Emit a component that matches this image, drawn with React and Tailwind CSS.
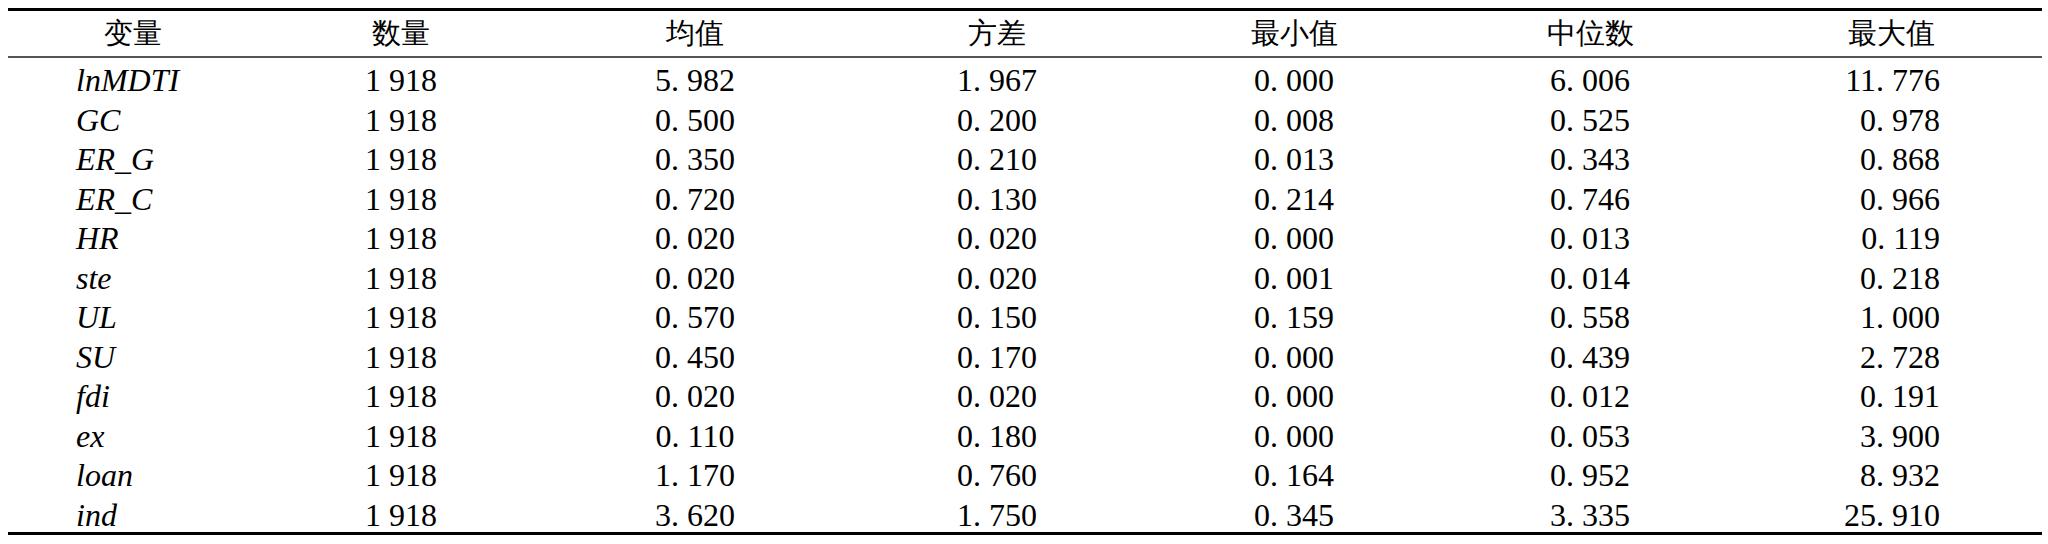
import React from "react";

const rows = [
  ["lnMDTI", "1 918", "5. 982", "1. 967", "0. 000", "6. 006", "11. 776"],
  ["GC", "1 918", "0. 500", "0. 200", "0. 008", "0. 525", "0. 978"],
  ["ER_G", "1 918", "0. 350", "0. 210", "0. 013", "0. 343", "0. 868"],
  ["ER_C", "1 918", "0. 720", "0. 130", "0. 214", "0. 746", "0. 966"],
  ["HR", "1 918", "0. 020", "0. 020", "0. 000", "0. 013", "0. 119"],
  ["ste", "1 918", "0. 020", "0. 020", "0. 001", "0. 014", "0. 218"],
  ["UL", "1 918", "0. 570", "0. 150", "0. 159", "0. 558", "1. 000"],
  ["SU", "1 918", "0. 450", "0. 170", "0. 000", "0. 439", "2. 728"],
  ["fdi", "1 918", "0. 020", "0. 020", "0. 000", "0. 012", "0. 191"],
  ["ex", "1 918", "0. 110", "0. 180", "0. 000", "0. 053", "3. 900"],
  ["loan", "1 918", "1. 170", "0. 760", "0. 164", "0. 952", "8. 932"],
  ["ind", "1 918", "3. 620", "1. 750", "0. 345", "3. 335", "25. 910"],
];

const headers = ["变量", "数量", "均值", "方差", "最小值", "中位数", "最大值"];

const cols = "grid grid-cols-[250px_286px_302px_302px_292px_300px_302px]";

export default function App() {
  return (
    <div className="h-[544px] w-[2048px] bg-white pl-2 pt-2 font-['Liberation_Serif'] text-black">
      <div className="w-[2034px] border-t-[3px] border-b-[3px] border-black">
        <div className={`${cols} h-[47px] items-center border-b-2 border-[#555] text-[29px]`}>
          {headers.map((h) => (
            <div key={h} className="text-center">
              {h}
            </div>
          ))}
        </div>
        {rows.map((r) => (
          <div key={r[0]} className={`${cols} h-[39.5px] pt-[3px] text-[32px] leading-[39.5px]`}>
            <div className="pl-[68px] italic">{r[0]}</div>
            {r.slice(1, 6).map((v, i) => (
              <div key={i} className="text-center whitespace-pre">
                {v}
              </div>
            ))}
            <div className="pr-[102px] text-right whitespace-pre">{r[6]}</div>
          </div>
        ))}
      </div>
    </div>
  );
}
